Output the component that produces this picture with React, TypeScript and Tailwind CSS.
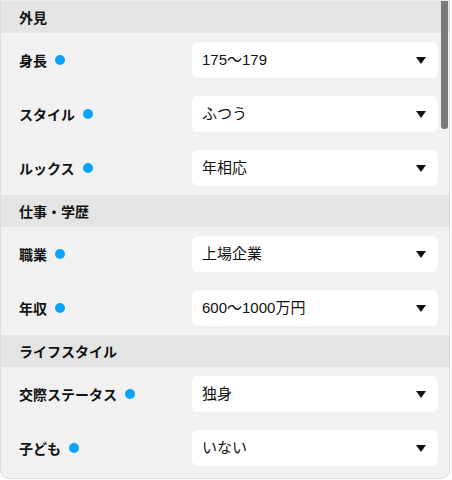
import React from 'react';

type Row = { label: string; value: string };
type Section = { title: string; rows: Row[] };

const sections: Section[] = [
  {
    title: '外見',
    rows: [
      { label: '身長', value: '175〜179' },
      { label: 'スタイル', value: 'ふつう' },
      { label: 'ルックス', value: '年相応' },
    ],
  },
  {
    title: '仕事・学歴',
    rows: [
      { label: '職業', value: '上場企業' },
      { label: '年収', value: '600〜1000万円' },
    ],
  },
  {
    title: 'ライフスタイル',
    rows: [
      { label: '交際ステータス', value: '独身' },
      { label: '子ども', value: 'いない' },
    ],
  },
];

const Caret = () => (
  <svg width="10" height="7" viewBox="0 0 10 7" className="shrink-0">
    <path d="M0 0 H10 L5 7 Z" fill="#111" />
  </svg>
);

export default function App() {
  return (
    <div
      className="w-[452px] h-[480px] bg-white"
      style={{ fontFamily: '"Noto Sans CJK JP", "Noto Sans", sans-serif' }}
    >
      <div className="relative w-[450px] h-[479px] bg-[#f1f1f1] rounded-b-[9px] border border-[#dcdcdc] border-t-[#ececec] overflow-hidden">
        {sections.map((s) => (
          <div key={s.title}>
            <div className="h-[32px] bg-[#e4e4e4] flex items-center pl-[18px] text-[14px] font-bold text-[#111]">
              {s.title}
            </div>
            <div className="flex flex-col gap-[18px] py-[9px]">
              {s.rows.map((r) => (
                <div key={r.label} className="flex items-center h-[36px]">
                  <div className="w-[191px] pl-[18px] flex items-center gap-[8px] text-[14px] font-bold text-[#111]">
                    <span>{r.label}</span>
                    <span className="w-[10px] h-[10px] rounded-full bg-[#0aa2ff]" />
                  </div>
                  <div
                    className="w-[246px] h-[36px] bg-white rounded-[6px] flex items-center justify-between pl-[10px] pr-[12px] text-[15px] text-[#111]"
                    style={{ fontFamily: '"Liberation Sans", "Noto Sans CJK JP", sans-serif' }}
                  >
                    <span>{r.value}</span>
                    <Caret />
                  </div>
                </div>
              ))}
            </div>
          </div>
        ))}
        <div className="absolute top-0 left-[440px] w-[7px] h-[128px] bg-[#7a7a7a] rounded-b-[3px]" />
      </div>
    </div>
  );
}
